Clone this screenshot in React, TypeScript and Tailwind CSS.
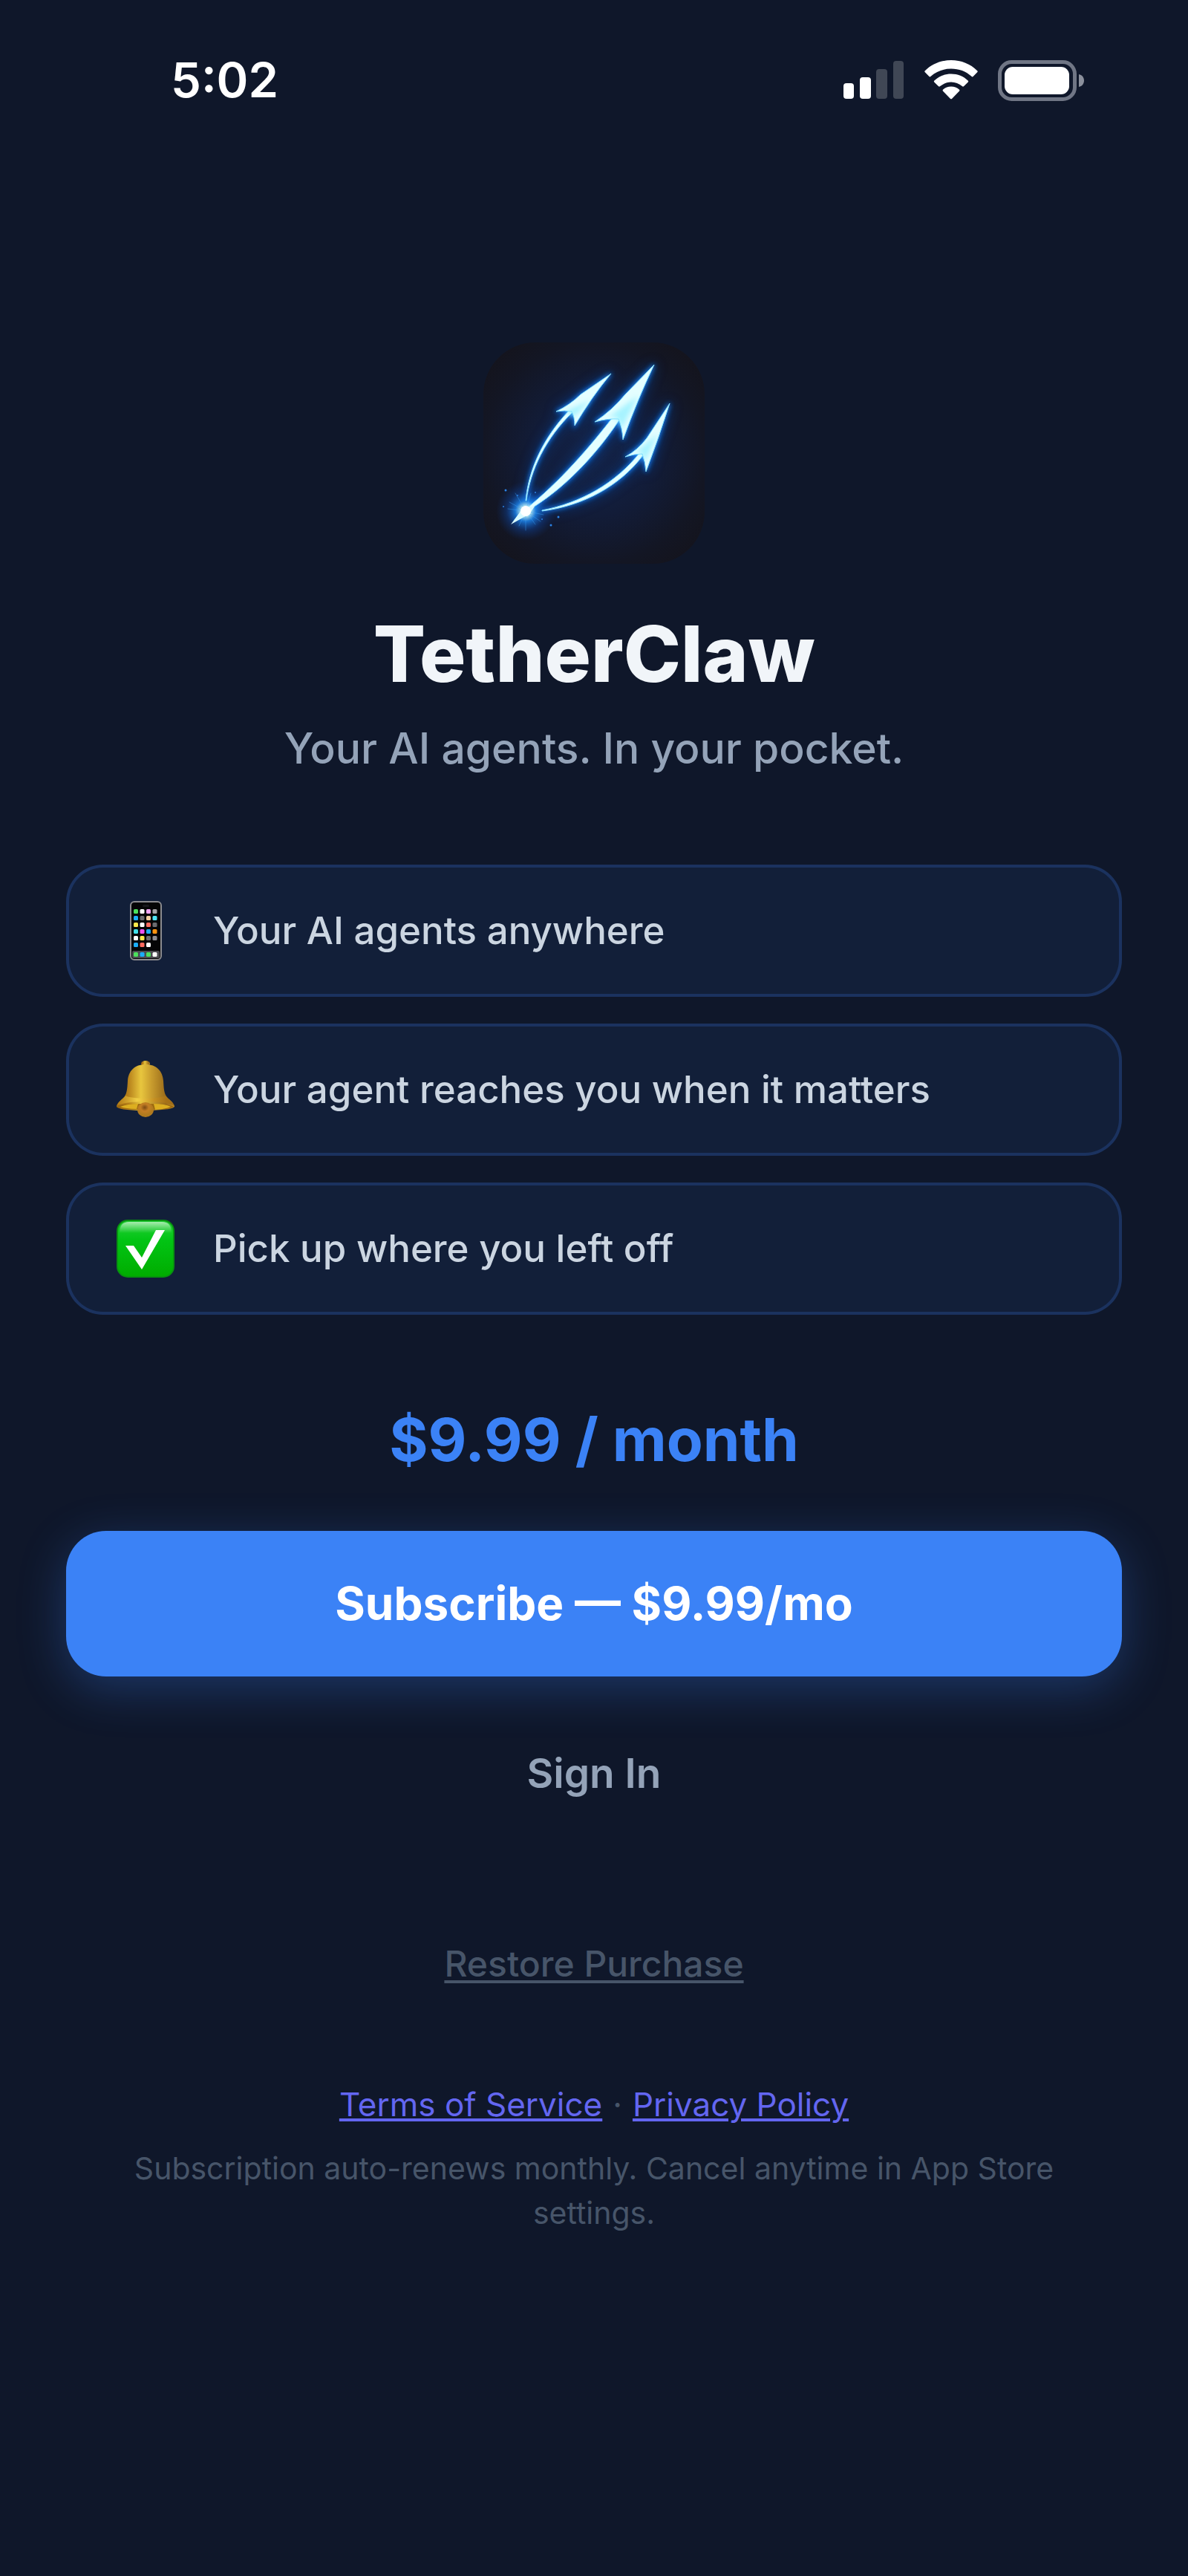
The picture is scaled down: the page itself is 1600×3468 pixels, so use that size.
import React from "react";

function SignalIcon() {
  return (
    <svg width="82" height="54" viewBox="0 0 82 54" aria-label="Signal strength" role="img">
      <rect x="0" y="31" width="14" height="21" rx="4" fill="#fff" />
      <rect x="22" y="23" width="15" height="29" rx="4" fill="#fff" />
      <rect x="44" y="12" width="15" height="40" rx="4" fill="#404755" />
      <rect x="67" y="1" width="14" height="51" rx="4" fill="#404755" />
    </svg>
  );
}

function WifiIcon() {
  return (
    <svg width="72" height="54" viewBox="0 0 72 54" fill="#fff" aria-label="Wi-Fi" role="img">
      <path d="M36 0c13.600 0 26 5 35.200 14.200.7.700.700 1.400 0 2.100l-5.400 5.500c-.8.800-1.600.800-2.400 0C56 15 46.500 11.500 36 11.500S16 15 8.600 21.800c-.8.800-1.600.800-2.400 0L.8 16.300c-.7-.7-.7-1.400 0-2.100C10 5 22.400 0 36 0Z" />
      <path d="M36 18.500c8.800 0 16.600 3.200 22.600 8.900.8.800.800 1.600 0 2.400L53.200 35c-.8.800-1.600.800-2.400.1C46.700 31.700 41.700 29.500 36 29.500s-10.700 2.200-14.800 5.600c-.8.700-1.600.700-2.400-.1l-5.400-5.200c-.8-.8-.8-1.600 0-2.400 6-5.700 13.800-8.900 22.600-8.900Z" />
      <path d="M36 35.500c4.200 0 8 1.500 10.800 4 .8.700.8 1.500.1 2.200l-9.700 10c-.8.800-1.600.800-2.400 0l-9.700-10c-.7-.7-.7-1.500.1-2.200 2.800-2.500 6.600-4 10.800-4Z" />
    </svg>
  );
}

function BatteryIcon() {
  return (
    <svg width="116" height="55" viewBox="0 0 116 55" aria-label="Battery full" role="img">
      <rect x="2.500" y="2.500" width="101" height="50" rx="16" fill="none" stroke="#707685" strokeWidth="5" />
      <rect x="9" y="9" width="87" height="37" rx="11" fill="#fff" />
      <path d="M109 19c4 .8 7 4 7 8.500s-3 7.700-7 8.500Z" fill="#8b909c" />
    </svg>
  );
}

function Logo() {
  const arrows = (
    <>
      <path d="M69 223C74 182 95 139 131 104l-4-3C91 139 72 181 68 223Z" />
      <path d="M68 238C122 207 166 157 195 113l-7-6C157 148 113 199 66 236Z" />
      <path d="M90 237c56-7 105-34 136-75l-4-4c-33 42-80 68-132 78Z" />
      <path d="M183 52Q157 83 134 122 134 110 130 103 121 101 109 103 128 94 142 80Z" />
      <path d="M241 40Q218 88 199 141 198 124 193 113 180 112 161 117 185 101 202 80Z" />
      <path d="M262 92Q248 136 230 184 229 170 225 160 215 160 202 164 219 155 231 139Z" />
    </>
  );
  return (
    <svg className="size-[298px] shrink-0" viewBox="11 10 298 298" role="img" aria-label="TetherClaw logo">
      <defs>
        <radialGradient id="tile" cx="50%" cy="50%" r="62%">
          <stop offset="0" stopColor="#13244a" />
          <stop offset=".45" stopColor="#121c38" />
          <stop offset=".8" stopColor="#131624" />
          <stop offset="1" stopColor="#14141d" />
        </radialGradient>
        <radialGradient id="spark">
          <stop offset="0" stopColor="#fff" />
          <stop offset=".18" stopColor="#b8f1ff" />
          <stop offset=".35" stopColor="#1b8dff" stopOpacity=".85" />
          <stop offset=".65" stopColor="#0d55c8" stopOpacity=".35" />
          <stop offset="1" stopColor="#0d3c99" stopOpacity="0" />
        </radialGradient>
        <filter id="wide" x="-30%" y="-30%" width="160%" height="160%">
          <feGaussianBlur stdDeviation="9" />
        </filter>
        <filter id="near" x="-30%" y="-30%" width="160%" height="160%">
          <feGaussianBlur stdDeviation="3" />
        </filter>
        <filter id="inner">
          <feGaussianBlur stdDeviation="3" />
        </filter>
        <clipPath id="tileClip">
          <rect x="11" y="10" width="298" height="298" rx="70" />
        </clipPath>
      </defs>
      <g clipPath="url(#tileClip)">
        <rect x="10" y="10" width="300" height="300" fill="url(#tile)" />
        <g fill="#1150b8" stroke="#1150b8" strokeWidth="4" opacity=".6" filter="url(#wide)">{arrows}</g>
        <g fill="#1583ff" stroke="#1583ff" strokeWidth="3" opacity=".9" filter="url(#near)">{arrows}</g>
        <circle cx="68" cy="237" r="40" fill="url(#spark)" opacity=".9" />
        <g fill="#e4feff" stroke="#7fdcff" strokeWidth="1" strokeLinejoin="round">{arrows}</g>
        <g fill="#8deeff" opacity=".7" filter="url(#inner)">
          <path d="m155 88-22 22-12-7Z" />
          <path d="m219 82-22 45-7-17-12 2Z" />
          <path d="m246 133-18 38-4-13-9 1Z" />
        </g>
        <g stroke="#3fa8ff" strokeWidth="1" strokeLinecap="round" opacity=".4">
          <path d="m68 237-14-24M68 237l-24-3M68 237l-16 12M68 237v26M68 237l13 18M68 237l24 5M68 237l7-24M68 237l-9 20M68 237l20 14M68 237l-22-12" />
        </g>
        <path d="m48 255 14-19q3-6 8-4l10-1-7 10Z" fill="#d8faff" />
        <circle cx="68" cy="237" r="7" fill="#fff" />
        <g fill="#2b82e6">
          <circle cx="41" cy="209" r="1.500" />
          <circle cx="38" cy="231" r="1" />
          <circle cx="112" cy="245" r="1.500" />
          <circle cx="102" cy="256" r="1.500" />
          <circle cx="90" cy="248" r="1" />
          <circle cx="81" cy="212" r="1" />
          <circle cx="57" cy="216" r="1" />
        </g>
      </g>
    </svg>
  );
}

const appRows = [
  ["#4be05c", "#fff", "#f3a6f5", "#a5a5a8"],
  ["#1badf8", "#6c6c70", "#f2cfa0", "#4fe3f5"],
  ["#fbe84b", "#fff", "#ff6a5e", "#6c6c70"],
  ["#41e0ea", "#ee52f2", "#1badf8", "#ff9410"],
  ["#fff", "#fbe84b", "#6c6c70", "#8e8e93"],
  ["#1badf8", "#ff6a5e", "#fff"],
];
const dockApps = ["#4be05c", "#1badf8", "#4be05c", "#fff"];

function PhoneIcon() {
  return (
    <svg className="size-20 shrink-0" viewBox="0 0 80 80" aria-hidden="true">
      <rect x="19" y="1" width="41" height="78" rx="5" fill="#050506" stroke="#8b8b8f" strokeWidth="2" />
      <rect x="35" y="5" width="9" height="3" rx="1.500" fill="#18181b" />
      <rect x="21" y="67" width="37" height="10" rx="2" fill="#4b4b50" />
      {appRows.map((row, r) =>
        row.map((color, c) => (
          <rect key={`${r}-${c}`} x={23 + c * 8.500} y={11 + r * 9} width="6" height="6" rx="1.500" fill={color} />
        )),
      )}
      {dockApps.map((color, c) => (
        <rect key={c} x={23 + c * 8.500} y="69" width="6" height="6" rx="1.500" fill={color} />
      ))}
    </svg>
  );
}

function BellIcon() {
  return (
    <svg className="size-20 shrink-0" viewBox="0 0 80 80" aria-hidden="true">
      <defs>
        <linearGradient id="brass" x1="0" x2="1">
          <stop offset="0" stopColor="#9a6410" />
          <stop offset=".2" stopColor="#b57f1a" />
          <stop offset=".42" stopColor="#e8c63e" />
          <stop offset=".6" stopColor="#c99d2e" />
          <stop offset=".85" stopColor="#9a6b1a" />
          <stop offset="1" stopColor="#b98d30" />
        </linearGradient>
        <linearGradient id="lip" x1="0" x2="1">
          <stop offset="0" stopColor="#b87d14" />
          <stop offset=".35" stopColor="#f7d84b" />
          <stop offset=".65" stopColor="#c89022" />
          <stop offset="1" stopColor="#96600f" />
        </linearGradient>
        <radialGradient id="clapper" cx="45%" cy="35%">
          <stop offset="0" stopColor="#7c4a14" />
          <stop offset=".5" stopColor="#c47e24" />
          <stop offset="1" stopColor="#b07a1e" />
        </radialGradient>
      </defs>
      <ellipse cx="39" cy="5" rx="6" ry="4" fill="url(#brass)" />
      <path d="M39 6c15 0 23 9 24 22 .6 11 1 16 4 21 3 4 9 7 11 13 1 4-16 6-39 6S-1 66 0 62c2-6 8-9 11-13 3-5 3.400-10 4-21C16 15 24 6 39 6Z" fill="url(#brass)" />
      <path d="M12 48c8 5 46 5 54 0 4 5 10 8 12 14-12-8-66-8-78 0 2-6 8-9 12-14Z" fill="url(#lip)" opacity=".75" />
      <ellipse cx="39" cy="63" rx="38" ry="4" fill="#9c680f" />
      <path d="M5 63q10-4 24-4l-2 7q-15-.5-22-3Zm45-4q15 0 23 4-7 3-21 4Z" fill="#dcae20" />
      <ellipse cx="39" cy="67" rx="11" ry="10" fill="url(#clapper)" />
    </svg>
  );
}

function CheckIcon() {
  return (
    <svg className="size-20 shrink-0" viewBox="0 0 80 80" aria-hidden="true">
      <defs>
        <linearGradient id="green" x1="0" y1="0" x2="0" y2="1">
          <stop offset="0" stopColor="#22cf35" />
          <stop offset=".35" stopColor="#02c414" />
          <stop offset="1" stopColor="#00ad00" />
        </linearGradient>
        <linearGradient id="gloss" x1="0" y1="0" x2="0" y2="1">
          <stop offset="0" stopColor="#fff" stopOpacity=".6" />
          <stop offset="1" stopColor="#fff" stopOpacity="0" />
        </linearGradient>
      </defs>
      <rect x="0" y="1" width="78" height="78" rx="15" fill="#07930f" />
      <rect x="2" y="3" width="74" height="74" rx="13" fill="url(#green)" />
      <path d="M4 19C4 9 8 4 17 4h44c9 0 13 5 13 15Z" fill="url(#gloss)" />
      <path d="M12 36h11l11 16 19-37h12L34 68Z" fill="#fff" />
    </svg>
  );
}

const features = [
  { icon: <PhoneIcon />, text: "Your AI agents anywhere" },
  { icon: <BellIcon />, text: "Your agent reaches you when it matters" },
  { icon: <CheckIcon />, text: "Pick up where you left off" },
];

export default function App() {
  return (
    <div className="flex min-h-screen flex-col bg-[#0f172a] font-['Inter',sans-serif]">
      <header className="flex items-center justify-between pt-16 pr-[140px] pl-[230px]">
        <time className="text-[65px] leading-[88px] font-semibold text-white">5:02</time>
        <div className="flex items-center gap-[27px]">
          <SignalIcon />
          <WifiIcon />
          <BatteryIcon />
        </div>
      </header>

      <main className="flex flex-col items-center px-[89px] pt-[309px] text-center">
        <Logo />
        <h1 className="mt-[57px] text-[104px] leading-[128px] font-extrabold text-slate-100">TetherClaw</h1>
        <p className="mt-6 text-[57px] leading-[80px] font-medium text-[#94a3b8]">Your AI agents. In your pocket.</p>

        <ul className="mt-[116px] flex w-full flex-col gap-9">
          {features.map(({ icon, text }) => (
            <li
              key={text}
              className="flex items-center gap-[50px] rounded-[50px] border-4 border-[#3b82f6]/20 bg-[#3b82f6]/8 px-16 py-[45px] text-left text-[51px] leading-[80px] font-medium text-[#cbd5e1]"
            >
              {icon}
              {text}
            </li>
          ))}
        </ul>

        <p className="mt-[120px] text-[80px] leading-[96px] font-bold text-[#3b82f6]">$9.99 / month</p>

        <button
          type="button"
          className="mt-[75px] w-full rounded-[54px] bg-[#3b82f6] py-[58px] text-[62px] leading-[80px] font-bold text-white shadow-[0_16px_64px_rgba(59,130,246,0.3)]"
        >
          Subscribe — $9.99/mo
        </button>
        <button type="button" className="mt-[90px] text-[55px] leading-[80px] font-semibold text-[#94a3b8]">
          Sign In
        </button>
        <button
          type="button"
          className="mt-[187px] text-[48px] leading-[60px] font-medium text-[#475569] underline decoration-4 underline-offset-[5px]"
        >
          Restore Purchase
        </button>

        <nav className="mt-[129px] flex gap-[14px] text-[44px] leading-[60px] text-[#475569]">
          <a href="#terms" className="text-[#6366f1] underline decoration-4 underline-offset-[3px]">
            Terms of Service
          </a>
          <span>·</span>
          <a href="#privacy" className="text-[#6366f1] underline decoration-4 underline-offset-[3px]">
            Privacy Policy
          </a>
        </nav>
        <p className="mt-[26px] px-16 text-[41px] leading-[60px] text-[#475569]">
          Subscription auto-renews monthly. Cancel anytime in App Store settings.
        </p>
      </main>
    </div>
  );
}
